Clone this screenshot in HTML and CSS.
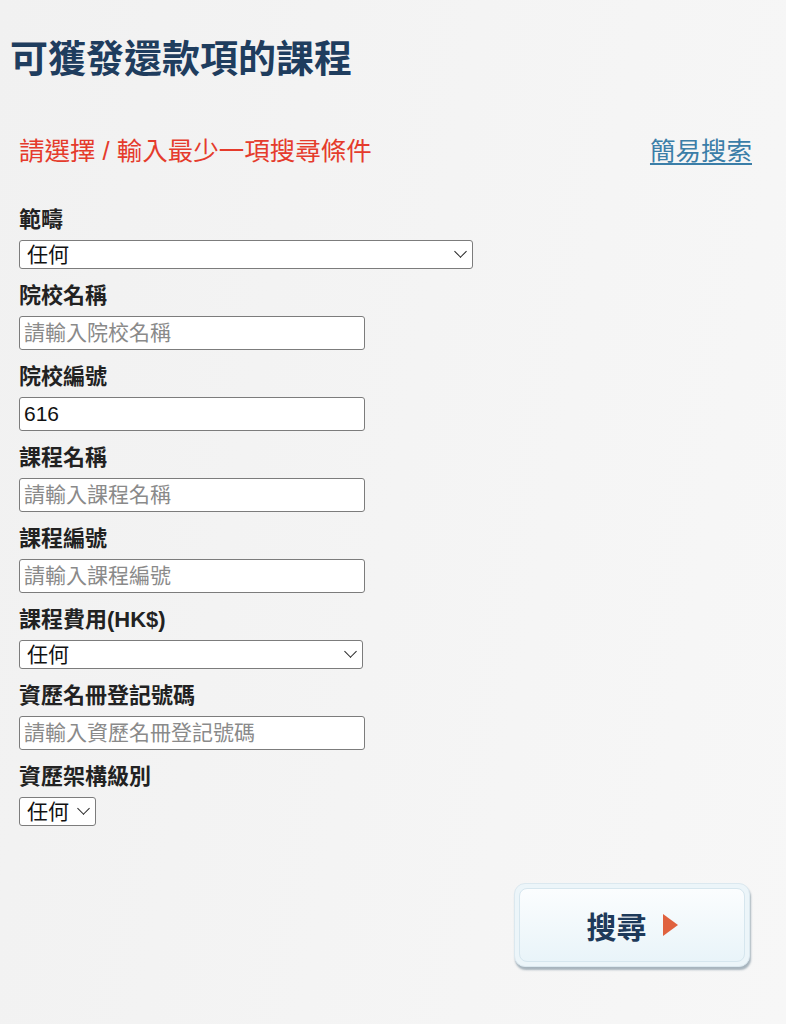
FILE: index.html
```html
<!DOCTYPE html>
<html>
<head>
    <meta charset="utf-8">
    <title>可獲發還款項的課程</title>
    <link rel="stylesheet" href="styles.css">
</head>
<body>
    <div class="page">
        <h1 class="page-title">可獲發還款項的課程</h1>
        <div class="search-panel">
            <div class="notice-row">
                <span class="notice">請選擇 / 輸入最少一項搜尋條件</span>
                <a href="#" class="simple-link">簡易搜索</a>
            </div>
            <form class="search-form" onsubmit="return false;">
                <div class="field">
                    <label>範疇</label>
                    <span class="select-wrap">
                        <select class="select-wide"><option>任何</option></select>
                    </span>
                </div>
                <div class="field">
                    <label>院校名稱</label>
                    <input type="text" placeholder="請輸入院校名稱">
                </div>
                <div class="field">
                    <label>院校編號</label>
                    <input type="text" value="616">
                </div>
                <div class="field">
                    <label>課程名稱</label>
                    <input type="text" placeholder="請輸入課程名稱">
                </div>
                <div class="field">
                    <label>課程編號</label>
                    <input type="text" placeholder="請輸入課程編號">
                </div>
                <div class="field">
                    <label>課程費用(HK$)</label>
                    <span class="select-wrap">
                        <select class="select-medium"><option>任何</option></select>
                    </span>
                </div>
                <div class="field">
                    <label>資歷名冊登記號碼</label>
                    <input type="text" placeholder="請輸入資歷名冊登記號碼">
                </div>
                <div class="field">
                    <label>資歷架構級別</label>
                    <span class="select-wrap">
                        <select><option>任何</option></select>
                    </span>
                </div>
                <div class="actions">
                    <button type="submit" class="search-btn">
                        <span class="search-btn-inner">搜尋<span class="arrow"></span></span>
                    </button>
                </div>
            </form>
        </div>
    </div>
</body>
</html>
```

FILE: styles.css
```css
body {
    margin: 0;
    font-family: "Liberation Sans", "Noto Sans CJK TC", sans-serif;
    background: linear-gradient(100deg, #f1f1f1, #f7f7f7);
    min-height: 1024px;
    color: #222;
}

.page {
    padding: 0 10px;
}

.page-title {
    margin: 36px 0 0;
    font-size: 38px;
    line-height: 46px;
    font-weight: bold;
    color: #1f3d5e;
}

.search-panel {
    padding: 0 24px 0 9px;
}

.notice-row {
    display: flex;
    justify-content: space-between;
    align-items: center;
    margin-top: 54px;
    line-height: 31px;
    font-size: 25.5px;
}

.notice {
    color: #e53b2c;
}

.simple-link {
    color: #3b7ea8;
    text-decoration: underline;
    text-underline-offset: 3px;
}

.search-form {
    margin-top: 39px;
}

.field {
    margin-bottom: 13px;
}

.field label {
    display: block;
    font-size: 22px;
    line-height: 28px;
    font-weight: bold;
    color: #222;
    margin-bottom: 6px;
}

input[type="text"] {
    display: block;
    box-sizing: border-box;
    width: 346px;
    height: 34px;
    margin: 0;
    padding: 0 4px;
    border: 1px solid #7c7c7c;
    border-radius: 3px;
    background: #fff;
    font-family: "Liberation Sans", "Noto Sans CJK TC", sans-serif;
    font-size: 21px;
    color: #111;
}

input[type="text"]::placeholder {
    color: #8a8a8a;
}

.select-wrap {
    position: relative;
    display: inline-block;
    vertical-align: top;
}

.select-wrap::after {
    content: '';
    position: absolute;
    right: 8px;
    top: 7px;
    width: 8px;
    height: 8px;
    border-right: 1.5px solid #222;
    border-bottom: 1.5px solid #222;
    transform: rotate(45deg);
    pointer-events: none;
}

select {
    appearance: none;
    -webkit-appearance: none;
    display: block;
    box-sizing: border-box;
    height: 29px;
    margin: 0;
    padding: 0 26px 0 7px;
    border: 1px solid #7c7c7c;
    border-radius: 3px;
    background: #fff;
    font-family: "Liberation Sans", "Noto Sans CJK TC", sans-serif;
    font-size: 21px;
    color: #111;
}

.select-wide {
    width: 454px;
}

.select-medium {
    width: 344px;
}

.actions {
    display: flex;
    justify-content: flex-end;
    margin-top: 57px;
    padding-right: 2px;
}

.search-btn {
    width: 236px;
    height: 84px;
    padding: 4px;
    border: 1px solid #dbe8ef;
    border-radius: 11px;
    background: #ecf5f9;
    box-shadow: 1px 3px 2px rgba(70, 100, 120, 0.45);
    cursor: pointer;
}

.search-btn-inner {
    display: flex;
    align-items: center;
    justify-content: center;
    gap: 16px;
    height: 100%;
    box-sizing: border-box;
    border: 1px solid #d6e6ee;
    border-radius: 8px;
    background: linear-gradient(#fbfdfe, #e9f4f9);
    font-family: "Noto Sans CJK TC", sans-serif;
    font-size: 30px;
    font-weight: bold;
    color: #1e3a5a;
}

.arrow {
    display: inline-block;
    width: 0;
    height: 0;
    border-top: 11px solid transparent;
    border-bottom: 11px solid transparent;
    border-left: 15px solid #e0623f;
}
```
